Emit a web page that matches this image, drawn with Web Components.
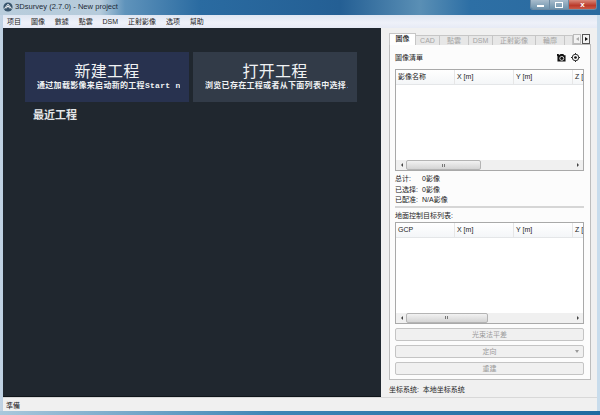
<!DOCTYPE html>
<html>
<head>
<meta charset="utf-8">
<style>
  html, body { margin: 0; padding: 0; width: 600px; height: 415px; overflow: hidden; }
  body { font: 8px "Noto Sans CJK SC", "Liberation Sans", sans-serif; color: #222; }
</style>
</head>
<body>
<app-window>
  <title-bar slot="title" text="3Dsurvey (2.7.0) - New project"></title-bar>
  <menu-bar slot="menu"></menu-bar>
  <welcome-pane slot="main"></welcome-pane>
  <side-panel slot="side"></side-panel>
  <status-bar slot="status">準備</status-bar>
</app-window>

<script>
const SANS = `"Liberation Sans", "Noto Sans CJK SC", sans-serif`;
const SERIF = `"Liberation Serif", "Noto Sans CJK SC", serif`;
const MONO = `"Liberation Mono", "Noto Sans CJK SC", monospace`;

class AppWindow extends HTMLElement {
  constructor() {
    super();
    this.attachShadow({ mode: "open" }).innerHTML = `
<style>
  :host { display: flex; flex-direction: column; width: 600px; height: 415px; background: linear-gradient(90deg, #c3d3e3 0, #b5cde2 1%, #c8dcec 100%); }
  .body { flex: 1; display: flex; flex-direction: column; margin: 0 3px; min-height: 0; }
  .split { flex: 1; display: flex; min-height: 0; }
  .bottom { height: 4px; flex: none; background: linear-gradient(90deg, #a9c8dc, #3f86b6 45%, #1f6aa0); }
</style>
<slot name="title"></slot>
<div class="body">
  <slot name="menu"></slot>
  <div class="split"><slot name="main"></slot><slot name="side"></slot></div>
  <slot name="status"></slot>
</div>
<div class="bottom"></div>`;
  }
}

class TitleBar extends HTMLElement {
  constructor() {
    super();
    this.attachShadow({ mode: "open" }).innerHTML = `
<style>
  :host { display: flex; align-items: flex-start; height: 15px; flex: none; position: relative; font: 7.6px ${SANS}; color: #1c2a36;
    background: linear-gradient(90deg, #b9cddc 0, #b6cbdb 100px, #5f93bb 125px, #2a6ba1 200px, #245f94 340px, #5a8fb5 420px, #2d6fa5 470px, #2a6a9f 600px); }
  .logo { width: 10px; height: 10px; margin: 2px 2px 0 3px; }
  .label { margin-top: 2px; line-height: 10px; white-space: nowrap; }
  .ctrls { margin-left: auto; margin-right: 3px; display: flex; height: 9px; border: 1px solid #6d8aa3; border-top: 0; border-radius: 0 0 3px 3px; overflow: hidden; }
  .ctrls span { display: flex; align-items: center; justify-content: center; width: 18px; background: linear-gradient(#a8bccc, #6f93ad); }
  .ctrls span + span { border-left: 1px solid #6d8aa3; }
  .ctrls .close { width: 27px; background: linear-gradient(#d98a7c, #bb3a2a 60%, #c95a48); }
  i { display: block; background: #fff; }
  .min { width: 7px; height: 2px; margin-top: 3px; }
  .max { width: 6px; height: 4px; background: none; border: 1px solid #fff; }
  .x { color: #fff; font: bold 8px/9px ${SANS}; }
</style>
<svg class="logo" viewBox="0 0 10 10">
  <circle cx="5" cy="5" r="4.6" fill="#39566d"/>
  <path d="M1.5 6.5 5 2.2 8.5 6.5M3 6.5 5 4 7 6.5" fill="none" stroke="#fff" stroke-width="1"/>
</svg>
<span class="label">${this.getAttribute("text")}</span>
<div class="ctrls">
  <span><i class="min"></i></span>
  <span><i class="max"></i></span>
  <span class="close"><b class="x">x</b></span>
</div>`;
  }
}

class MenuBar extends HTMLElement {
  constructor() {
    super();
    const items = ["项目", "圖像", "數據", "點雲", "DSM", "正射影像", "选项", "幫助"];
    this.attachShadow({ mode: "open" }).innerHTML = `
<style>
  :host { display: flex; gap: 9.9px; height: 13px; flex: none; padding: 0 0 0 4px; align-items: center;
    background: linear-gradient(#dfe6f2, #eef1f9 60%, #e6eaf5); font: 7px ${SANS}; color: #222; }
  span { line-height: 13px; white-space: nowrap; }
</style>
${items.map((t) => `<span>${t}</span>`).join("")}`;
  }
}

class BigButton extends HTMLElement {
  constructor() {
    super();
    this.attachShadow({ mode: "open" }).innerHTML = `
<style>
  :host { display: flex; flex-direction: column; align-items: center; width: 164px; height: 50px; box-sizing: border-box; padding-top: 10px;
    background: var(--bg); color: #f0f2f4; font-family: ${SERIF}; overflow: hidden; }
  .big { font-size: 16px; line-height: 19px; letter-spacing: .3px; white-space: nowrap; }
  .small { font-family: ${MONO}; font-size: 8px; font-weight: bold; line-height: 10px; white-space: nowrap; width: 143px; margin-left: 3px; overflow: hidden; letter-spacing: .3px; }
</style>
<div class="big">${this.getAttribute("title")}</div>
<div class="small"><slot></slot></div>`;
  }
}

class WelcomePane extends HTMLElement {
  constructor() {
    super();
    this.attachShadow({ mode: "open" }).innerHTML = `
<style>
  :host { display: flex; flex-direction: column; width: 378px; box-sizing: border-box; background: #20272f; padding: 24px 0 0 22px; border-bottom: 1px solid #10151a; }
  .row { display: flex; gap: 4px; }
  .new { --bg: #28324f; }
  .open { --bg: #323b48; }
  h2 { margin: 7px 0 0 8px; font: bold 11px/13px ${SERIF}; color: #e4e6e8; }
</style>
<div class="row">
  <big-button class="new" title="新建工程">通过加载影像来启动新的工程Start new</big-button>
  <big-button class="open" title="打开工程">浏览已存在工程或者从下面列表中选择.</big-button>
</div>
<h2>最近工程</h2>`;
  }
}

class TabBar extends HTMLElement {
  constructor() {
    super();
    const tabs = [["圖像", 27], ["CAD", 24], ["點雲", 29], ["DSM", 24], ["正射影像", 43], ["輪廓", 29], ["", 8]];
    this.attachShadow({ mode: "open" }).innerHTML = `
<style>
  :host { display: flex; height: 12px; flex: none; align-items: flex-end; font: 7px ${SANS}; color: #a4a4a4; position: relative; overflow: hidden; width: 202px; }
  .tab { box-sizing: border-box; height: 10px; line-height: 9px; text-align: center; background: #e7e7e7; border: 1px solid #c6c6c6; border-bottom: 0; border-left: 0; white-space: nowrap; overflow: hidden; flex: none; }
  .tab.on { height: 12px; line-height: 10px; background: #fff; color: #222; font-weight: 500; border-left: 1px solid #c6c6c6; }
  .arrows { position: absolute; right: 1px; top: 1px; display: flex; gap: 1px; }
  .arrows b { display: flex; align-items: center; justify-content: center; width: 8px; height: 10px; background: #f2f2f2; border: 1px solid #bbb; box-sizing: border-box; }
  .arrows b:last-child { border-color: #555; }
  .l { border: 2px solid transparent; border-right: 3px solid #aaa; border-left: 0; }
  .r { border: 2px solid transparent; border-left: 3px solid #111; border-right: 0; }
</style>
${tabs.map(([t, w], i) => `<div class="tab${i ? "" : " on"}" style="width:${w}px">${t}</div>`).join("")}
<div class="arrows"><b><span class="l"></span></b><b><span class="r"></span></b></div>`;
  }
}

class DataTable extends HTMLElement {
  constructor() {
    super();
    const first = this.getAttribute("first");
    const thumb = this.getAttribute("thumb");
    this.attachShadow({ mode: "open" }).innerHTML = `
<style>
  :host { display: flex; flex-direction: column; flex: none; box-sizing: border-box; height: 102px; width: 189px; border: 1px solid #a9a9a9; background: #fff; font: 7px ${SANS}; color: #222; overflow: hidden; }
  .head { display: flex; height: 15px; flex: none; background: linear-gradient(#fff, #f4f6f8); border-bottom: 1px solid #e4e6e8; overflow: hidden; box-sizing: border-box; }
  .head span { flex: none; box-sizing: border-box; width: 59px; padding-left: 2px; line-height: 13px; border-right: 1px solid #e6e6e6; white-space: nowrap; }
  .head span:last-child { border: 0; width: 12px; }
  .rows { flex: 1; }
  .bar { display: flex; align-items: center; height: 10px; flex: none; background: #f0f0f0; }
  .btn { width: 11px; display: flex; justify-content: center; flex: none; }
  .l { border: 2px solid transparent; border-right: 2px solid #444; border-left: 0; }
  .r { border: 2px solid transparent; border-left: 2px solid #444; border-right: 0; }
  .track { flex: 1; height: 100%; }
  .thumb { box-sizing: border-box; height: 100%; margin-left: -1px; width: ${thumb}px; border: 1px solid #b4b4b4; border-radius: 2px; background: linear-gradient(#f2f2f2, #d4d4d4); display: flex; align-items: center; justify-content: center; }
  .grip { width: 4px; height: 3px; background: repeating-linear-gradient(90deg, #777 0 1px, transparent 1px 2px); }
</style>
<div class="head"><span>${first}</span><span>X [m]</span><span>Y [m]</span><span>Z [</span></div>
<div class="rows"></div>
<div class="bar"><div class="btn"><span class="l"></span></div><div class="track"><div class="thumb"><span class="grip"></span></div></div><div class="btn"><span class="r"></span></div></div>`;
  }
}

class PanelButton extends HTMLElement {
  constructor() {
    super();
    this.attachShadow({ mode: "open" }).innerHTML = `
<style>
  :host { display: flex; align-items: center; justify-content: center; flex: none; position: relative; box-sizing: border-box; height: 13px; width: 189px; border: 1px solid #c4c4c4; border-radius: 2px;
    background: #f0f0f0; color: #9a9a9a; font: 7px ${SANS}; }
  .caret { position: absolute; right: 4px; top: 4px; border: 2px solid transparent; border-top: 3px solid #999; border-bottom: 0; }
</style>
<slot></slot>${this.hasAttribute("combo") ? '<span class="caret"></span>' : ""}`;
  }
}

class SidePanel extends HTMLElement {
  constructor() {
    super();
    this.attachShadow({ mode: "open" }).innerHTML = `
<style>
  :host { display: flex; flex-direction: column; flex: 1; box-sizing: border-box; background: #f0f0f0; padding: 5px 0 0 8px; font: 7px ${SANS}; color: #222; min-width: 0; }
  .page { box-sizing: border-box; width: 202px; height: 336px; margin-top: -1px; border: 1px solid #bdbdbd; background: #fcfcfc; padding: 0 0 0 5px; display: flex; flex-direction: column; flex: none; }
  .head { display: flex; align-items: center; height: 24px; flex: none; }
  .head svg { width: 9px; height: 9px; }
  .icons { margin-left: auto; margin-right: 10px; display: flex; gap: 5px; }
  .stats { margin-top: 2px; display: grid; grid-template-columns: 27px auto; grid-auto-rows: 10.5px; line-height: 10.5px; width: 100px; padding-top: 1px; flex: none; }
  hr { width: 189px; margin: 0; border: 0; height: 2px; background: #d6d6d6; flex: none; }
  .gcp { line-height: 12px; margin-top: 2px; flex: none; }
  .btns { display: flex; flex-direction: column; gap: 4px; margin-top: 4px; }
  .crs { margin: 4px 0 0 0; line-height: 12px; color: #222; }
</style>
<tab-bar></tab-bar>
<div class="page">
  <div class="head">
    <span>圖像清單</span>
    <div class="icons">
      <svg viewBox="0 0 10 10"><path d="M0 1h2v1h1l1-1h3l1 1.5h1.5V9.5H.5V3.5L0 3z" fill="#111"/><circle cx="5.3" cy="6" r="2.2" fill="none" stroke="#fff" stroke-width=".9"/></svg>
      <svg viewBox="0 0 10 10"><circle cx="5" cy="5" r="3.6" fill="none" stroke="#111" stroke-width="1"/><circle cx="5" cy="5" r="1.5" fill="#111"/><path d="M5 0v1.5M5 8.5V10M0 5h1.5M8.5 5H10" stroke="#111" stroke-width="1"/></svg>
    </div>
  </div>
  <data-table first="影像名称" thumb="75"></data-table>
  <div class="stats">
    <span>总计:</span><span>0影像</span>
    <span>已选择:</span><span>0影像</span>
    <span>已配准:</span><span>N/A影像</span>
  </div>
  <hr>
  <div class="gcp">地面控制目标列表:</div>
  <data-table first="GCP" thumb="82"></data-table>
  <div class="btns">
    <panel-button>光束法平差</panel-button>
    <panel-button combo>定向</panel-button>
    <panel-button>重建</panel-button>
  </div>
</div>
<div class="crs">坐标系统:&nbsp; 本地坐标系统</div>`;
  }
}

class StatusBar extends HTMLElement {
  constructor() {
    super();
    this.attachShadow({ mode: "open" }).innerHTML = `
<style>
  :host { display: flex; align-items: center; height: 14px; flex: none; box-sizing: border-box; padding-left: 3px; background: #f0f0f0; border-top: 1px solid #d8d8d8; font: 7px ${SANS}; color: #222; }
</style>
<slot></slot>`;
  }
}

customElements.define("title-bar", TitleBar);
customElements.define("menu-bar", MenuBar);
customElements.define("big-button", BigButton);
customElements.define("welcome-pane", WelcomePane);
customElements.define("tab-bar", TabBar);
customElements.define("data-table", DataTable);
customElements.define("panel-button", PanelButton);
customElements.define("side-panel", SidePanel);
customElements.define("status-bar", StatusBar);
customElements.define("app-window", AppWindow);
</script>
</body>
</html>
